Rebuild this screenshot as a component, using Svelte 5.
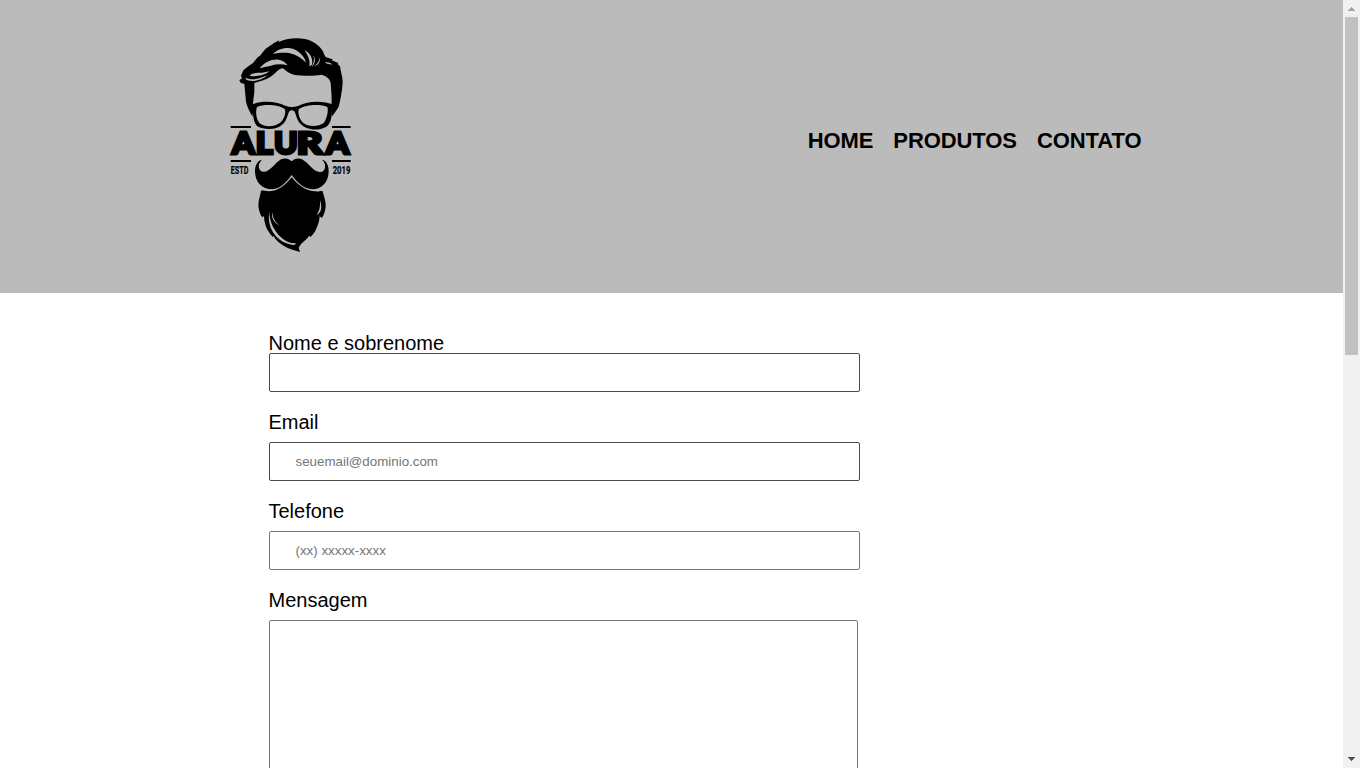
<script>
  const links = ['HOME', 'PRODUTOS', 'CONTATO'];
</script>

<div class="window">
  <div class="page">
    <header>
      <div class="container">
        <h1>
          <svg class="logo" viewBox="0 0 390 690" role="img" aria-label="Alura">
            <path d="M43 151L51 145L48 137L55 121L71 108L84 99L98 82L105 77L121 57L146 40L162 31L161 36C180 26 213 21 240 27C267 33 282 47 292 61L300 78L303 82L323 88L320 91L340 99L338 102L345 109C346 121 352 137 353 153C353 175 346 213 341 230C337 238 327 251 321 259L318 234C322 209 319 190 317 159C314 144 302 137 289 134C263 139 229 137 207 134C192 131 182 122 174 115C163 114 155 127 139 139C123 150 102 155 88 159L88 187L83 226L85 240L82 260C76 246 66 232 63 215L58 162L47 158Z"/>
            <g class="cut">
              <path d="M144 72C160 53 200 46 221 66C232 75 240 84 243 98C232 86 215 75 195 70C175 67 158 69 144 72Z"/>
              <path d="M104 115C119 97 139 87 161 89C173 91 182 98 188 106C170 101 154 102 137 107C124 111 114 111 104 115Z"/>
              <path d="M74 136C82 128 97 128 111 128L134 124C118 137 95 140 77 138Z"/>
              <path d="M62 143C75 151 105 148 128 135C108 154 76 157 62 148Z"/>
              <path d="M238 60C255 69 265 84 261 104L253 109C256 93 250 77 238 60Z"/>
              <path d="M265 76C273 88 270 103 259 112C267 98 269 88 265 76ZM284 82C288 94 279 107 267 109C278 101 284 92 284 82Z"/>
              <path d="M300 97C309 95 319 98 323 105C315 102 305 104 300 97Z"/>
            </g>
            <path fill-rule="evenodd" d="M77 225C105 212 150 212 181 227C194 232 207 232 221 227C252 212 294 212 327 225L329 236L321 242C320 269 315 286 298 293C273 304 241 299 225 280C215 268 213 253 209 245C204 239 197 239 192 245C187 256 185 272 173 283C153 302 117 300 97 289C86 280 85 258 82 241L76 237ZM96 231C91 244 93 267 104 280C121 293 150 291 167 277C179 265 184 244 179 237C160 224 120 221 96 231ZM222 237C217 246 222 265 234 278C251 292 281 290 296 279C306 267 311 241 307 231C286 221 242 224 222 237Z"/>
            <g class="rules"><path d="M17 291H78M321 291H377M17 393H78M321 393H377"/></g>
            <g class="word">
              <text x="21" y="373" textLength="68" lengthAdjust="spacingAndGlyphs">A</text>
              <text x="92" y="373" textLength="51" lengthAdjust="spacingAndGlyphs">L</text>
              <text x="147" y="373" textLength="71" lengthAdjust="spacingAndGlyphs">U</text>
              <text x="215" y="373" textLength="77" lengthAdjust="spacingAndGlyphs">R</text>
              <text x="303" y="373" textLength="69" lengthAdjust="spacingAndGlyphs">A</text>
            </g>
            <text class="small" x="17" y="431" textLength="53" lengthAdjust="spacingAndGlyphs">ESTD</text>
            <text class="small" x="323" y="431" textLength="53" lengthAdjust="spacingAndGlyphs">2019</text>
            <path d="M111 389C97 391 89 408 90 427C92 458 111 478 141 478C168 477 187 453 200 435C213 453 234 477 263 478C290 478 309 458 311 427C312 408 305 391 291 389C304 401 303 420 291 425C269 433 254 401 231 388C218 382 207 387 200 394C191 385 181 383 168 388C146 401 132 433 109 424C98 415 99 400 111 389Z"/>
            <path d="M200 442C182 465 159 484 130 484C121 484 114 481 108 482C106 499 98 513 101 535C103 547 107 557 112 562L117 558C117 575 122 594 134 610L143 621L146 618C153 635 178 650 198 658L225 666L221 653L228 642L244 628L253 617L256 621C269 613 283 581 284 559L291 564C298 554 303 538 302 520C300 506 295 491 292 482C282 485 275 484 268 484C240 482 219 464 200 442Z"/>
            <g class="cut">
              <path d="M133 547C133 573 146 602 167 621C181 634 197 641 213 640L209 645C185 645 160 631 146 610C134 593 129 568 133 547Z"/>
              <path d="M142 546C143 562 149 577 165 587C147 579 138 564 142 546Z"/>
              <path d="M285 511C292 529 290 550 274 555C284 543 286 530 285 511Z"/>
            </g>
          </svg>
        </h1>
        <nav>
          {#each links as link}<a href="#{link}">{link}</a>{/each}
        </nav>
      </div>
    </header>
    <main>
      <form>
        <label for="nome">Nome e sobrenome</label>
        <input id="nome" class="required" type="text" />
        <label for="email">Email</label>
        <input id="email" class="required" type="email" placeholder="seuemail@dominio.com" />
        <label for="telefone">Telefone</label>
        <input id="telefone" type="tel" placeholder="(xx) xxxxx-xxxx" />
        <label for="mensagem">Mensagem</label>
        <textarea id="mensagem"></textarea>
      </form>
    </main>
  </div>
  <div class="scrollbar" aria-hidden="true">
    <svg class="arrow up" viewBox="0 0 17 17" shape-rendering="crispEdges"><path d="M8 7h1v1h1v1h1v1h1v1H5v-1h1V9h1V8h1z"/></svg>
    <div class="thumb"></div>
    <svg class="arrow down" viewBox="0 0 17 17" shape-rendering="crispEdges"><path d="M5 6h7v1h-1v1h-1v1H9v1H8V9H7V8H6V7H5z"/></svg>
  </div>
</div>

<style>
  :global(body) { margin: 0; overflow: hidden; }
  .window { display: flex; width: 1360px; height: 768px; overflow: hidden; background: #fff; font-family: "Liberation Sans", Arial, sans-serif; color: #000; }
  .page { flex: 1; height: 768px; overflow: hidden; }
  header { height: 293px; background: #bbb; }
  .container { display: flex; justify-content: space-between; width: 940px; margin: 0 auto; }
  h1 { margin: 0; padding: 30px 0 0 23.5px; line-height: 0; }
  .logo { width: 130px; height: 230px; overflow: visible; }
  .cut { fill: #bbb; }
  .rules { stroke: #000; stroke-width: 6; }
  .word { font: 900 92px Lato, sans-serif; stroke: #000; stroke-width: 9; }
  .small { font: 700 33px Roboto, sans-serif; stroke: #000; stroke-width: 0.6; }
  nav { display: flex; gap: 20px; padding-top: 127px; }
  nav a { color: #000; text-decoration: none; font-size: 22px; line-height: 27px; font-weight: bold; letter-spacing: -0.08px; }
  form { display: flex; flex-direction: column; align-items: flex-start; padding: 39px 0 0 269px; }
  label { height: 30px; margin-left: -0.5px; font-size: 20px; line-height: 21px; }
  label:first-child { height: 21px; line-height: 23px; }
  input { box-sizing: border-box; width: 591px; height: 39px; margin: 0 0 20px; padding: 0 25.5px; border: 1px solid #767676; border-radius: 2px; font: 13.333px "Liberation Sans", Arial, sans-serif; outline: none; background: #fff; }
  input.required { border-color: #4a4a4a; }
  input::placeholder { color: #757575; opacity: 1; }
  textarea { box-sizing: border-box; width: 589px; height: 200px; flex: none; margin: 0; border: 1px solid #767676; border-radius: 2px; resize: none; background: #fff; }
  .scrollbar { display: flex; flex-direction: column; align-items: center; width: 17px; height: 768px; background: #f1f1f1; }
  .arrow { width: 17px; height: 17px; flex: none; }
  .up { fill: #a3a3a3; }
  .down { margin-top: auto; fill: #505050; }
  .thumb { width: 13px; height: 338px; background: #c1c1c1; }
</style>
